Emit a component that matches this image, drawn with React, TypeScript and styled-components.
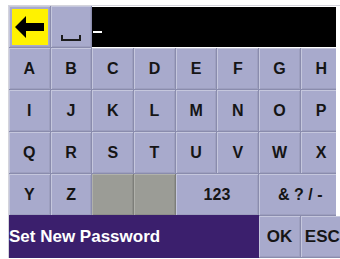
import styled, { createGlobalStyle } from "styled-components";

const GlobalStyle = createGlobalStyle`
  html, body {
    margin: 0;
    padding: 0;
    background: #ffffff;
    overflow: hidden;
  }
  body {
    font-family: "Liberation Sans", Arial, sans-serif;
  }
`;

const Frame = styled.div`
  margin: 5px 0 0 8px;
  border-top: 1px solid #d4d4dc;
  border-left: 1px solid #d4d4dc;
  width: 331px;
  overflow: hidden;
`;

const Upper = styled.div`
  width: 327px;
  overflow: hidden;
`;

const Grid = styled.div`
  display: grid;
  grid-template-columns: repeat(8, 41.7px);
  grid-auto-rows: 42px;
  width: 333.6px;
`;

const Key = styled.div<{ $span?: number; $blank?: boolean; $big?: boolean }>`
  grid-column: span ${(p) => p.$span ?? 1};
  display: flex;
  align-items: center;
  justify-content: center;
  box-sizing: border-box;
  background: ${(p) => (p.$blank ? "#9b9c96" : "#a8aacc")};
  border-right: 1px solid ${(p) => (p.$blank ? "#7d7e79" : "#8a8cad")};
  border-bottom: 1px solid ${(p) => (p.$blank ? "#7d7e79" : "#8a8cad")};
  box-shadow: inset 1px 1px 0 ${(p) => (p.$blank ? "#b0b1ab" : "#c5c7dd")},
    inset -1px -1px 0 ${(p) => (p.$blank ? "#8e8f8a" : "#9d9fbf")};
  font-weight: bold;
  font-size: ${(p) => (p.$big ? 17 : 16)}px;
  color: #151515;
  white-space: pre;
`;

const EdgeKey = styled(Key)`
  justify-content: flex-start;
  padding-left: 4px;
  overflow: hidden;
`;

const BackKey = styled(Key)`
  padding: 3px 2px 2px 3px;
`;

const BackFace = styled.div`
  flex: 1;
  align-self: stretch;
  background: #fff200;
  display: flex;
  align-items: center;
  justify-content: center;
`;

const SpaceKey = styled(Key)`
  align-items: flex-end;
  padding-bottom: 6px;
`;

const Display = styled.div`
  grid-column: span 6;
  background: #000000;
  margin: 1px 0 1px 0;
  display: flex;
  align-items: center;
  padding-left: 1px;
`;

const Cursor = styled.div`
  width: 9px;
  height: 2px;
  margin-top: 10px;
  background: #ffffff;
`;

const Title = styled.div`
  grid-column: span 6;
  background: #3b1f6d;
  color: #ffffff;
  font-weight: bold;
  font-size: 17px;
  display: flex;
  align-items: center;
  margin-top: -1px;
`;

const rows = [
  ["A", "B", "C", "D", "E", "F", "G", "H"],
  ["I", "J", "K", "L", "M", "N", "O", "P"],
  ["Q", "R", "S", "T", "U", "V", "W", "X"],
];

export default function App() {
  return (
    <>
      <GlobalStyle />
      <Frame>
        <Upper>
          <Grid>
            <BackKey>
              <BackFace>
                <svg width="30" height="22" viewBox="0 0 30 22">
                  <path d="M0 11 L11 0 L11 7 L29 7 L29 15 L11 15 L11 22 Z" fill="#000" />
                </svg>
              </BackFace>
            </BackKey>
            <SpaceKey>
              <svg width="20" height="6" viewBox="0 0 20 6">
                <path d="M1 0 V5 H19 V0" fill="none" stroke="#1c1c1c" strokeWidth="2" />
              </svg>
            </SpaceKey>
            <Display>
              <Cursor />
            </Display>
            {rows.flat().map((k) => (
              <Key key={k}>{k}</Key>
            ))}
            <Key>Y</Key>
            <Key>Z</Key>
            <Key $blank />
            <Key $blank />
            <Key $span={2}>123</Key>
            <Key $span={2}>{"& ? / -"}</Key>
          </Grid>
        </Upper>
        <Grid>
          <Title>Set New Password</Title>
          <Key $big>OK</Key>
          <EdgeKey $big>ESC</EdgeKey>
        </Grid>
      </Frame>
    </>
  );
}
